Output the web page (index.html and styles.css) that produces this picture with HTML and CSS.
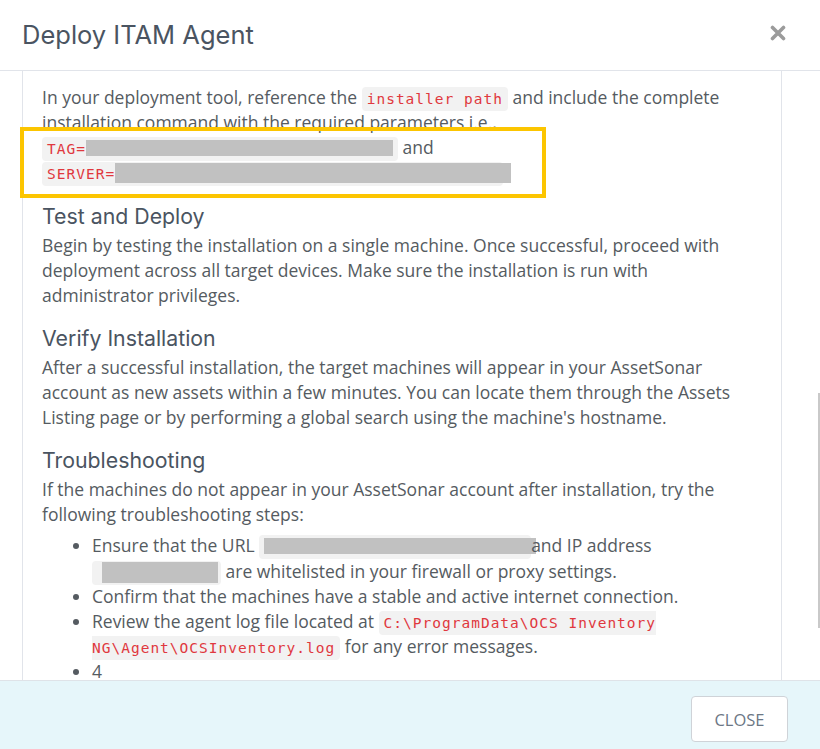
FILE: index.html
```html
<!DOCTYPE html>
<html lang="en">
<head>
    <meta charset="UTF-8">
    <meta name="viewport" content="width=device-width, initial-scale=1.0">
    <title>Deploy ITAM Agent</title>
    <link rel="stylesheet" href="styles.css">
</head>
<body>
    <div class="modal">
        <header class="modal-header">
            <h1 class="modal-title">Deploy ITAM Agent</h1>
            <button class="close-x" aria-label="Close">
                <svg width="16" height="16" viewBox="0 0 16 16">
                    <path d="M2.5 2.5 L13.5 13.5 M13.5 2.5 L2.5 13.5" stroke="#9b9b9b" stroke-width="3.6" stroke-linecap="round"/>
                </svg>
            </button>
        </header>

        <div class="modal-body">
            <div class="content">
                <p>In your deployment tool, reference the <code>installer path</code> and include the complete installation command with the required parameters i.e.,
                    <code class="nowrap">TAG=<span class="redact tag-redact"></span></code> and
                    <code class="nowrap">SERVER=<span class="redact server-redact"></span></code></p>

                <h3>Test and Deploy</h3>
                <p>Begin by testing the installation on a single machine. Once successful, proceed with deployment across all target devices. Make sure the installation is run with administrator privileges.</p>

                <h3>Verify Installation</h3>
                <p>After a successful installation, the target machines will appear in your AssetSonar account as new assets within a few minutes. You can locate them through the Assets Listing page or by performing a global search using the machine's hostname.</p>

                <h3>Troubleshooting</h3>
                <p>If the machines do not appear in your AssetSonar account after installation, try the following troubleshooting steps:</p>
                <ul>
                    <li class="first-item">Ensure that the URL <code class="nowrap"><span class="redact url-redact"></span></code>and IP address <code class="nowrap"><span class="redact ip-redact"></span></code> are whitelisted in your firewall or proxy settings.</li>
                    <li>Confirm that the machines have a stable and active internet connection.</li>
                    <li>Review the agent log file located at <code>C:\ProgramData\OCS Inventory NG\Agent\OCSInventory.log</code> for any error messages.</li>
                    <li>4</li>
                </ul>
            </div>
            <!-- highlight drawn over the parameters -->
            <div class="highlight"></div>
            <div class="scroll-thumb"></div>
        </div>

        <footer class="modal-footer">
            <button class="btn-close">CLOSE</button>
        </footer>
    </div>
</body>
</html>
```

FILE: styles.css
```css
/* Modal page */
html, body {
    margin: 0;
    padding: 0;
    height: 100%;
    overflow: hidden;
    background-color: #fff;
}

body {
    font-family: "Open Sans", Arial, sans-serif;
    color: #555b61;
}

.modal {
    display: flex;
    flex-direction: column;
    height: 749px;
}

.modal-header {
    display: flex;
    align-items: center;
    justify-content: space-between;
    height: 70px;
    padding: 0 34px 0 22px;
    border-bottom: 1px solid #e1e4ea;
    flex-shrink: 0;
}

.modal-title {
    margin: 0;
    font-family: Inter, "Open Sans", sans-serif;
    font-weight: 400;
    font-size: 25.5px;
    color: #4a5461;
    padding-bottom: 2px;
}

.close-x {
    border: none;
    background: none;
    padding: 0;
    width: 16px;
    height: 16px;
    display: flex;
    cursor: pointer;
    margin-bottom: 4px;
}

.modal-body {
    position: relative;
    flex: 1;
    overflow: hidden;
    padding: 0 38px 0 22px;
}

.content {
    height: 100%;
    border-left: 1px solid #e1e4ea;
    border-right: 1px solid #e1e4ea;
    padding: 14px 19px 0;
    font-size: 17.5px;
    line-height: 25px;
}

.content p {
    margin: 0;
}

.content h3 {
    margin: 16px 0 3px;
    font-family: Inter, "Open Sans", sans-serif;
    font-weight: 400;
    font-size: 21.3px;
    line-height: 28px;
    color: #4a5461;
}

.content p:first-child {
    padding-bottom: 1px;
}

.content ul {
    margin: 5px 0 0;
    padding-left: 50px;
}

.content .first-item {
    line-height: 26px;
}

code {
    font-family: "DejaVu Sans Mono", "Liberation Mono", monospace;
    font-size: 14.5px;
    line-height: 1;
    letter-spacing: 1px;
    color: #e0383e;
    background-color: #f2f2f2;
    border-radius: 4px;
    padding: 4px 5px;
}

.nowrap {
    white-space: nowrap;
}

.redact {
    display: inline-block;
    background-color: #c1c1c1;
    vertical-align: middle;
    margin-top: -4px;
}

.tag-redact {
    width: 307px;
    height: 16px;
}

.server-redact {
    width: 396px;
    height: 20px;
    margin-right: -13px;
}

.url-redact {
    width: 272px;
    height: 16px;
    margin-right: -10px;
}

.ip-redact {
    width: 116px;
    height: 21px;
    margin-left: 5px;
    margin-right: -2px;
}

.highlight {
    position: absolute;
    left: 20px;
    top: 56px;
    width: 518px;
    height: 63px;
    border: 4px solid #fcc500;
}

.scroll-thumb {
    position: absolute;
    right: 0;
    top: 322px;
    width: 2px;
    height: 235px;
    background-color: #c9c9c9;
}

.modal-footer {
    box-sizing: border-box;
    flex-shrink: 0;
    height: 69px;
    background-color: #e6f6fa;
    border-top: 1px solid #dfe3e8;
    display: flex;
    justify-content: flex-end;
    align-items: flex-start;
    padding: 15px 32px 0;
}

.btn-close {
    width: 97px;
    height: 46px;
    background-color: #fff;
    border: 1px solid #cfd3d8;
    border-radius: 4px;
    font-family: "Open Sans", Arial, sans-serif;
    font-size: 16.5px;
    color: #6c7785;
    cursor: pointer;
}
```
